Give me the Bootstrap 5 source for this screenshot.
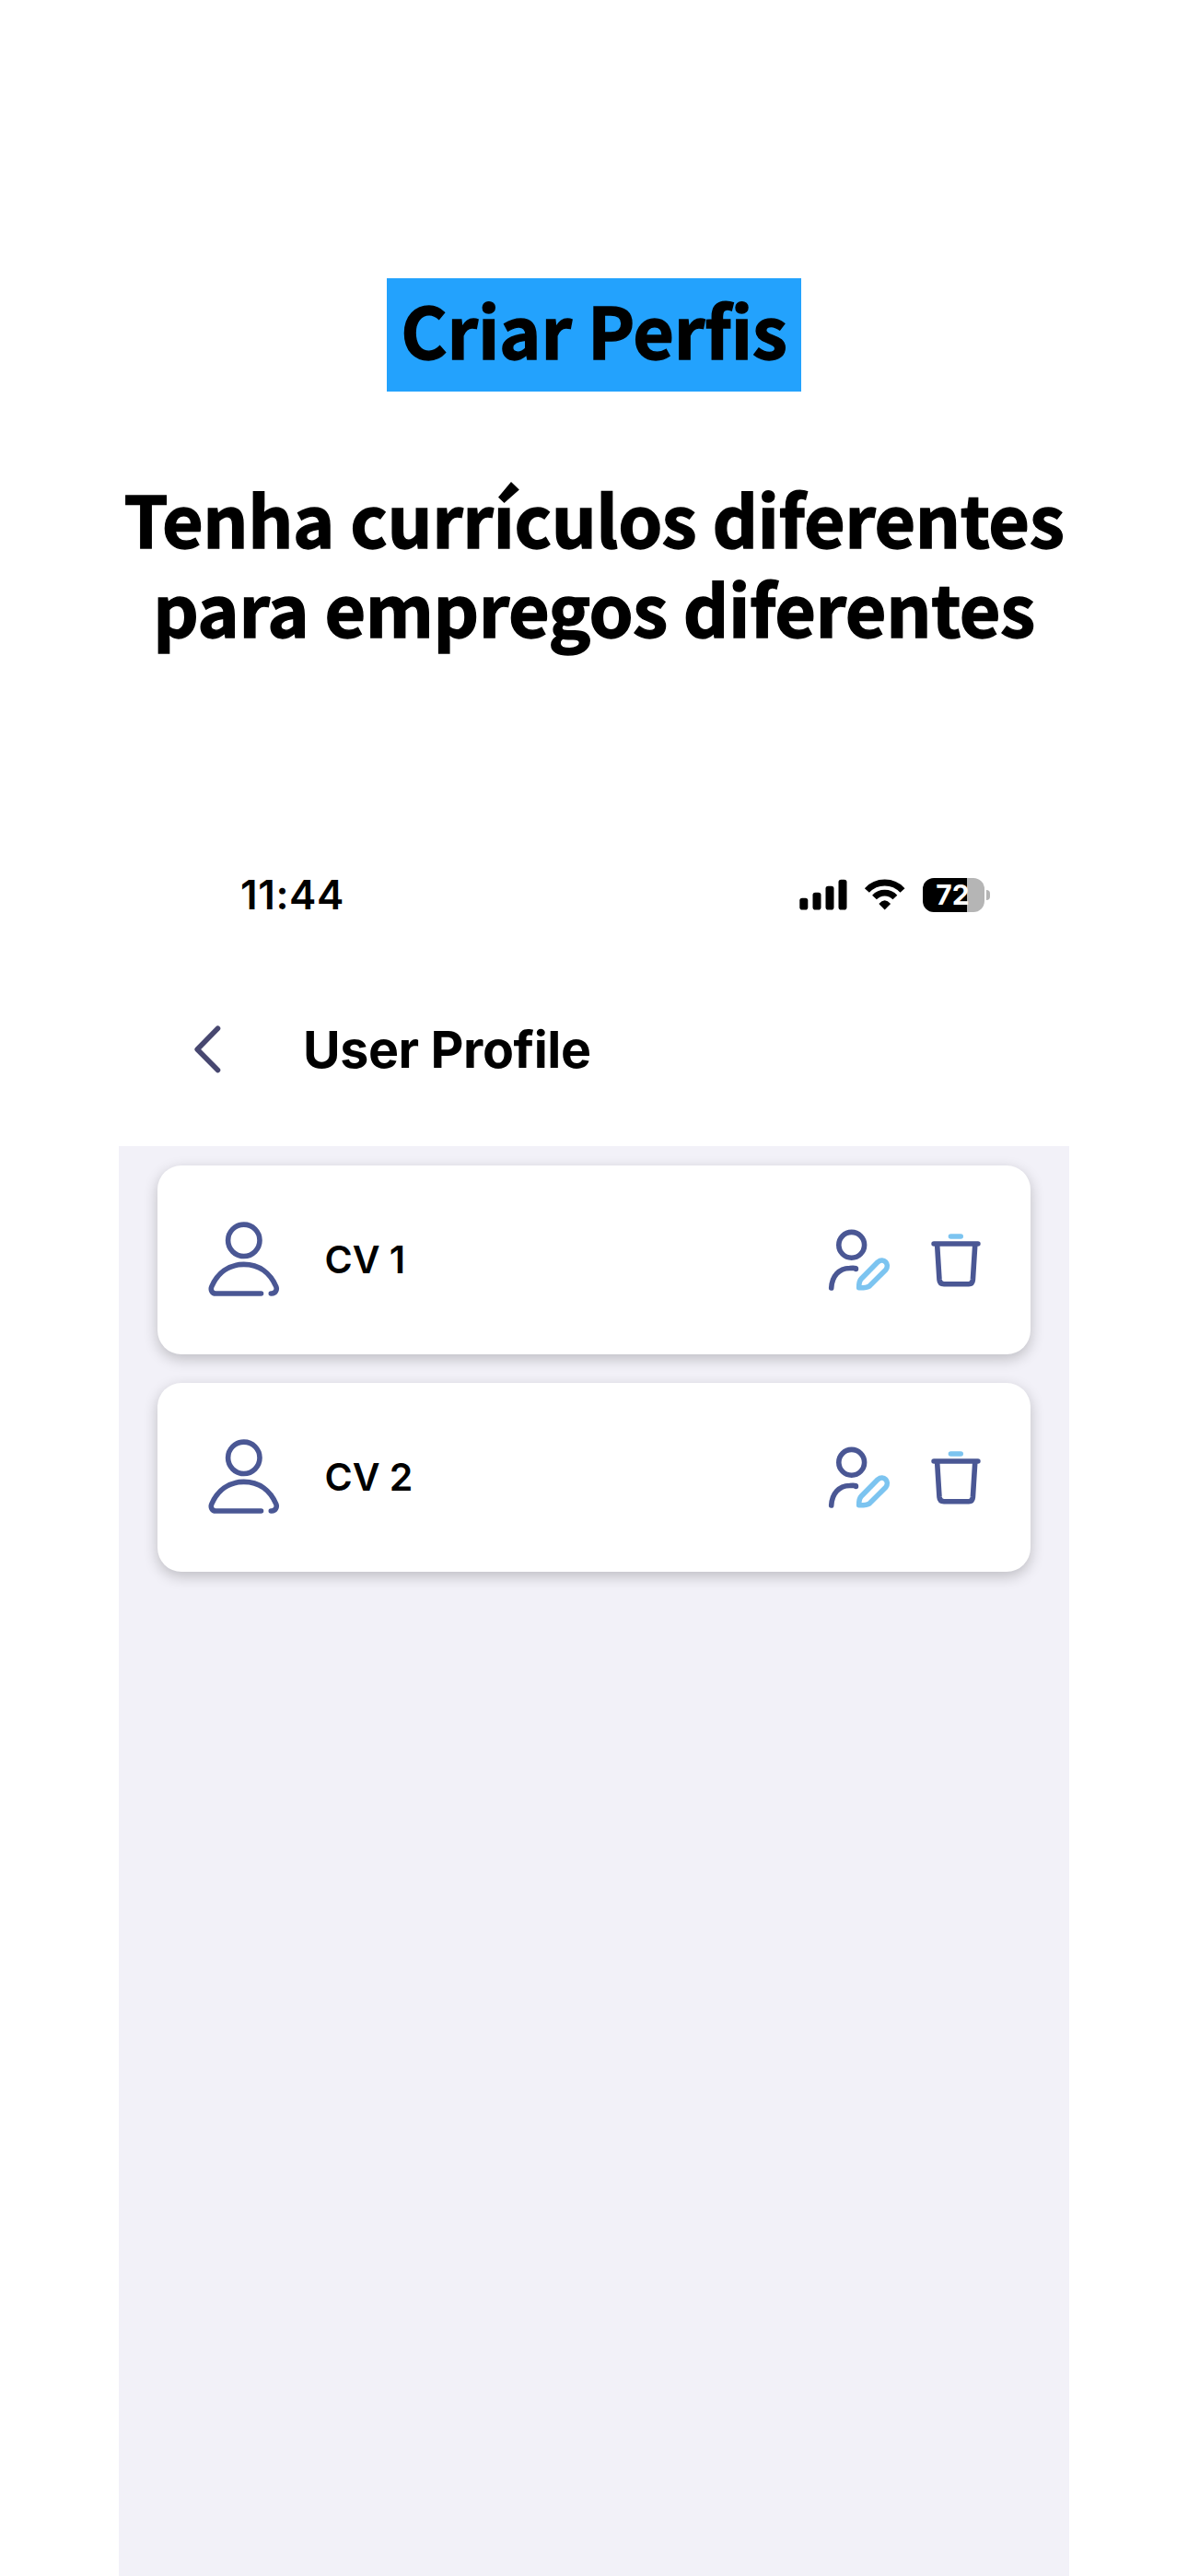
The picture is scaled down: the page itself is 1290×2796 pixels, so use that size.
<!DOCTYPE html>
<html lang="pt">
<head>
<meta charset="utf-8">
<meta name="viewport" content="width=device-width, initial-scale=1">
<title>Criar Perfis</title>
<link href="https://cdn.jsdelivr.net/npm/bootstrap@5.3.0/dist/css/bootstrap.min.css" rel="stylesheet">
<style>
  body { background:#fff; color:#000; font-family:Inter,"Liberation Sans",sans-serif; }
  .promo { height:932px; padding-top:302px; font-family:"Noto Sans CJK SC","Noto Sans",sans-serif; font-weight:700; -webkit-text-stroke:1.4px #000; }
  .promo-tag { width:450px; height:123px; background:#23a2fd; font-size:77px; line-height:110px; letter-spacing:-.2px; margin:0 0 87.6px; white-space:nowrap; font-weight:700; }
  .promo-text { font-size:77px; line-height:97px; letter-spacing:-.4px; white-space:nowrap; margin:0; }
  .phone { width:1032px; margin-left:129px; height:1864px; }
  .status { height:79px; padding:0 86.5px 1px 132px; }
  .clock { font-size:44px; font-weight:600; line-height:48px; letter-spacing:.6px; }
  .battery { width:67px; height:37px; border-radius:12px; background:linear-gradient(90deg,#000 48px,#b5b5b5 48px); color:#fff; font-size:30px; font-weight:700; line-height:37px; padding-right:2px; }
  .nub { width:3.5px; height:11px; background:#b5b5b5; border-radius:0 4px 4px 0; margin-left:2px; }
  .topbar { height:233px; padding:98px 0 0 80px; }
  .topbar h1 { font-size:55.5px; font-weight:700; line-height:60px; letter-spacing:-.4px; margin:0 0 0 84px; }
  .screen { background:#f2f1f8; padding:21px 42px 0 42px; gap:31.5px; }
  .profile { height:204.5px; border:0; border-radius:26px; padding:2px 50px 0 53.5px; box-shadow:0 5px 15px rgba(0,0,0,.22); }
  .profile-name { font-size:41px; font-weight:600; line-height:50px; margin:-2px auto 0 48px; }
  svg { display:block; flex:none; fill:none; stroke-linecap:round; stroke-linejoin:round; }
  .ink { stroke:#4a5794; stroke-width:5.6; }
  .sky { stroke:#7cc4f0; stroke-width:5.6; }
  .wifi { margin-left:16px; }
  .battery { margin-left:17px; }
  .bin { margin-left:38px; }
</style>
<script src="https://cdn.jsdelivr.net/npm/bootstrap@5.3.0/dist/js/bootstrap.bundle.min.js"></script>
</head>
<body>
<header class="promo d-flex flex-column align-items-center text-center">
  <h2 class="promo-tag">Criar Perfis</h2>
  <p class="promo-text">Tenha currículos diferentes<br>para empregos diferentes</p>
</header>
<main class="phone d-flex flex-column">
  <div class="status d-flex align-items-center justify-content-between">
    <span class="clock">11:44</span>
    <div class="d-flex align-items-center">
      <svg width="54" height="42" viewBox="0 0 54 42"><g fill="#000"><rect x="1.3" y="24.7" width="9" height="12.8" rx="2.8"/><rect x="15.5" y="18.7" width="9" height="18.8" rx="2.8"/><rect x="29.5" y="11.7" width="9" height="25.8" rx="2.8"/><rect x="43.5" y="4.7" width="9" height="32.8" rx="2.8"/></g></svg>
      <svg class="wifi" width="48" height="42" viewBox="0 0 48 42"><g stroke="#000" stroke-linecap="butt"><path stroke-width="6.8" d="M4.4 16.5A26.2 26.2 0 0 1 43 16.5"/><path stroke-width="6.6" d="M12.5 24A15.3 15.3 0 0 1 34.9 24"/></g><path fill="#000" d="M23.7 37.6L17.3 31Q23.7 23.6 30.1 31Z"/></svg>
      <div class="battery text-center">72</div>
      <div class="nub"></div>
    </div>
  </div>
  <div class="topbar d-flex align-items-start">
    <svg width="36" height="60" viewBox="0 0 36 60"><path d="M27.5 7.3L5.2 30L27.5 52.5" stroke="#474770" stroke-width="5.6"/></svg>
    <h1>User Profile</h1>
  </div>
  <section class="screen flex-grow-1 d-flex flex-column">
    <article class="card profile d-flex flex-row align-items-center">
      <svg width="80" height="86" viewBox="0 1 80 86"><g class="ink"><circle cx="39.8" cy="22.3" r="17.2"/><path d="M58.5 80H9.5C5 80 3.4 76 4.8 72.5C11 58 23 48.4 39.8 48.4S68.6 58 74.8 72.5C76.2 76 74 80 70 80H69.3"/></g></svg>
      <span class="profile-name">CV 1</span>
      <svg width="72" height="74" viewBox="0 0 72 74"><g class="ink"><circle cx="27.7" cy="20.3" r="13.9"/><path d="M5.7 67C6.5 54 14 45.7 25.5 45.5C29 45.3 31 45.2 32.4 45.6V46.5"/></g><path class="sky" d="M35.7 66.8C35.6 61.5 36 59.3 38.2 57L56.2 38.8C62.5 33.5 69.5 41 64.8 47.2L47 64.9C44.5 66.8 41.5 66.9 35.7 66.8Z"/></svg>
      <svg class="bin" width="62" height="74" viewBox="0 0 62 74"><path class="sky" d="M25.5 11H36.2"/><path class="ink" d="M7.1 19H54.9M10.7 21L13 58Q13.4 62.7 18 62.7H45Q49 62.7 49.4 58L51.7 21"/></svg>
    </article>
    <article class="card profile d-flex flex-row align-items-center">
      <svg width="80" height="86" viewBox="0 1 80 86"><g class="ink"><circle cx="39.8" cy="22.3" r="17.2"/><path d="M58.5 80H9.5C5 80 3.4 76 4.8 72.5C11 58 23 48.4 39.8 48.4S68.6 58 74.8 72.5C76.2 76 74 80 70 80H69.3"/></g></svg>
      <span class="profile-name">CV 2</span>
      <svg width="72" height="74" viewBox="0 0 72 74"><g class="ink"><circle cx="27.7" cy="20.3" r="13.9"/><path d="M5.7 67C6.5 54 14 45.7 25.5 45.5C29 45.3 31 45.2 32.4 45.6V46.5"/></g><path class="sky" d="M35.7 66.8C35.6 61.5 36 59.3 38.2 57L56.2 38.8C62.5 33.5 69.5 41 64.8 47.2L47 64.9C44.5 66.8 41.5 66.9 35.7 66.8Z"/></svg>
      <svg class="bin" width="62" height="74" viewBox="0 0 62 74"><path class="sky" d="M25.5 11H36.2"/><path class="ink" d="M7.1 19H54.9M10.7 21L13 58Q13.4 62.7 18 62.7H45Q49 62.7 49.4 58L51.7 21"/></svg>
    </article>
  </section>
</main>
</body>
</html>
